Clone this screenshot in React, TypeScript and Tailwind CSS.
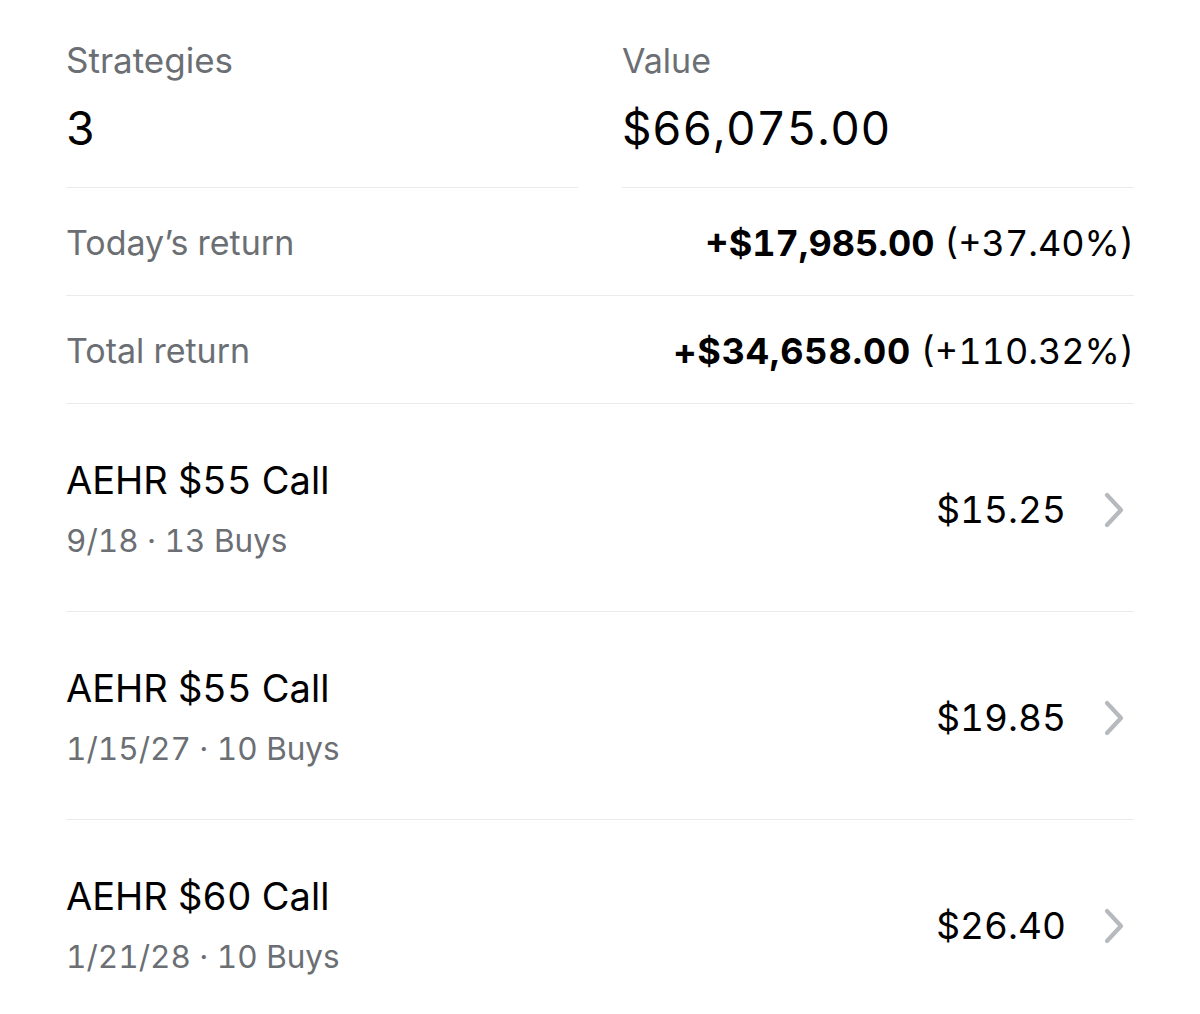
import React from "react";

function Chevron() {
  return (
    <svg width="24" height="36" viewBox="0 0 24 36" fill="none" className="shrink-0">
      <polyline points="5,3 19,18 5,33" stroke="#b6babe" strokeWidth="4.2" strokeLinecap="round" strokeLinejoin="round" />
    </svg>
  );
}

const rows = [
  { title: "AEHR $55 Call", sub: "9/18 · 13 Buys", price: "$15.25" },
  { title: "AEHR $55 Call", sub: "1/15/27 · 10 Buys", price: "$19.85" },
  { title: "AEHR $60 Call", sub: "1/21/28 · 10 Buys", price: "$26.40" },
];

export default function App() {
  return (
    <div
      className="w-[1200px] h-[1014px] overflow-hidden bg-white px-[66px] text-black tabular-nums"
      style={{ fontFamily: "Inter, 'Noto Sans', sans-serif" }}
    >
      <div className="grid grid-cols-2 gap-[44px]">
        <div className="border-b border-[#ebebeb] pt-[43px] h-[188px]">
          <div className="text-[35px] leading-[35px] text-[#6b6f74]">Strategies</div>
          <div className="text-[46px] leading-[46px] mt-[27px]">3</div>
        </div>
        <div className="border-b border-[#ebebeb] pt-[43px] h-[188px]">
          <div className="text-[34px] leading-[35px] text-[#6b6f74]">Value</div>
          <div className="text-[46px] leading-[46px] mt-[27px] tracking-[0.6px]">$66,075.00</div>
        </div>
      </div>

      <div className="flex items-center justify-between h-[108px] border-b border-[#ebebeb] pt-[2px]">
        <div className="text-[34px] text-[#6b6f74]">Today’s return</div>
        <div className="text-[36px]">
          <span className="font-bold">+$17,985.00</span> (+37.40%)
        </div>
      </div>
      <div className="flex items-center justify-between h-[108px] border-b border-[#ebebeb] pt-[2px]">
        <div className="text-[34px] text-[#6b6f74]">Total return</div>
        <div className="text-[36px]">
          <span className="font-bold tracking-[0.8px]">+$34,658.00</span> (+110.32%)
        </div>
      </div>

      {rows.map((r, i) => (
        <div
          key={i}
          className="flex items-center justify-between h-[208px] border-b border-[#ebebeb] pt-[4px]"
        >
          <div className="flex flex-col">
            <div className="text-[38px] leading-[44px]">{r.title}</div>
            <div className="text-[31.5px] leading-[40px] mt-[19px] text-[#6b6f74]">{r.sub}</div>
          </div>
          <div className="flex items-center gap-[36px] pr-[8px]">
            <div className="text-[37px]">{r.price}</div>
            <Chevron />
          </div>
        </div>
      ))}
    </div>
  );
}
